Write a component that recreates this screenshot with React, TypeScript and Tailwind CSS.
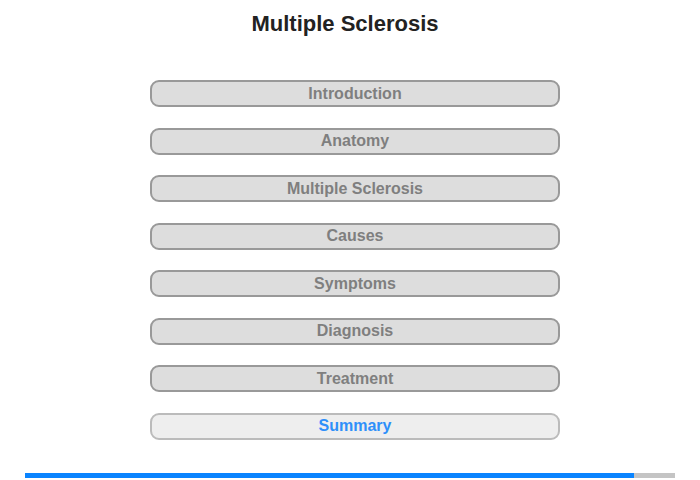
const sections = [
  'Introduction',
  'Anatomy',
  'Multiple Sclerosis',
  'Causes',
  'Symptoms',
  'Diagnosis',
  'Treatment',
  'Summary',
];

export default function App() {
  const active = 'Summary';

  return (
    <div className="w-[700px] h-[480px] bg-white font-['Liberation_Sans',Arial,sans-serif] overflow-hidden">
      <h1 className="w-[690px] pt-[11px] text-center text-[22px] leading-[26px] font-bold text-[#222222]">
        Multiple Sclerosis
      </h1>

      <div className="mt-[43px] ml-[150px] w-[410px] flex flex-col gap-[20.5px]">
        {sections.map((label) => (
          <button
            key={label}
            className={`h-[27px] w-full rounded-[9px] border-2 text-[16px] leading-[20px] font-bold ${
              label === active
                ? 'bg-[#eeeeee] border-[#bbbbbb] text-[#2e90fa]'
                : 'bg-[#dddddd] border-[#999999] text-[#7f7f7f]'
            }`}
          >
            {label}
          </button>
        ))}
      </div>

      {/* progress */}
      <div className="mt-[33px] ml-[25px] w-[650px] h-[5px] bg-[#c4c4c4] flex">
        <div className="h-full w-[609px] bg-[#0a84ff]" />
      </div>
    </div>
  );
}
